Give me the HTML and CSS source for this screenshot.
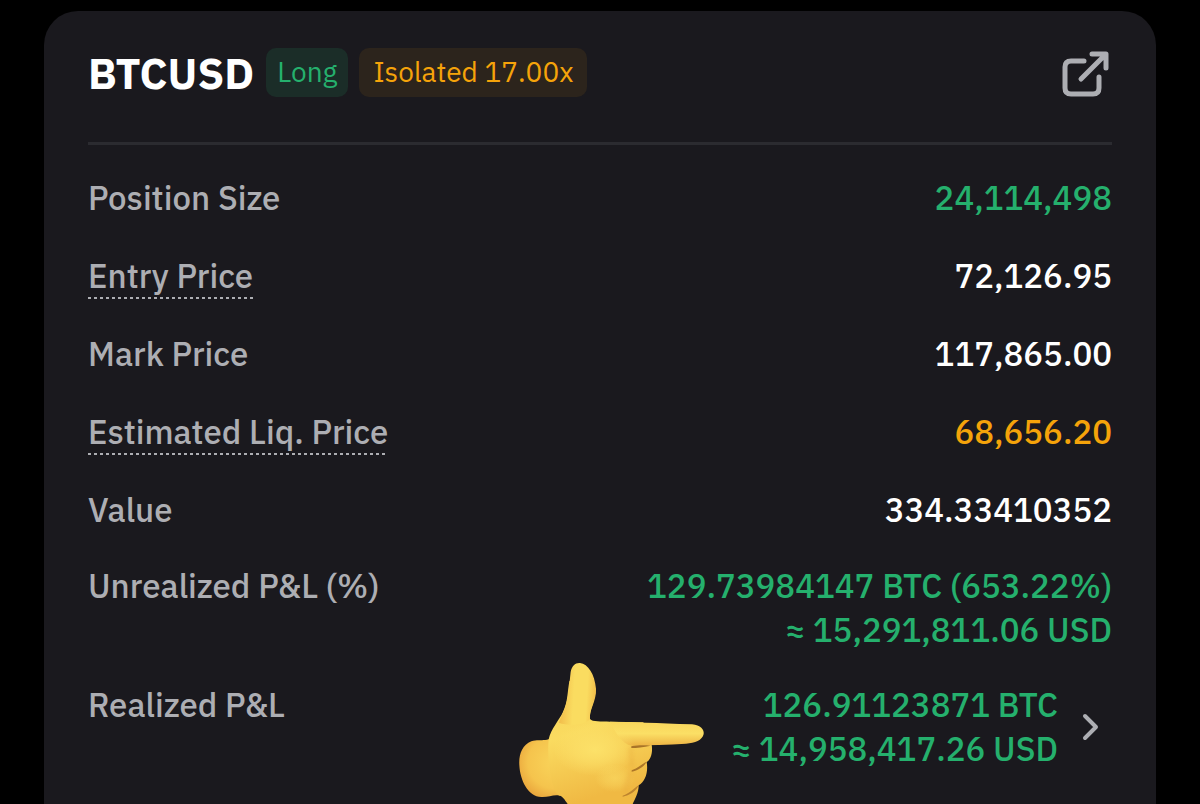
FILE: index.html
```html
<!DOCTYPE html>
<html lang="en">
<head>
    <meta charset="UTF-8">
    <meta name="viewport" content="width=device-width, initial-scale=1.0">
    <title>BTCUSD Position</title>
    <link rel="stylesheet" href="styles.css">
</head>
<body>
    <main class="card">
        <header class="card-header">
            <h1>BTCUSD</h1>
            <span class="badge long">Long</span>
            <span class="badge isolated">Isolated 17.00x</span>
            <button class="share" type="button" aria-label="Share position">
                <svg viewBox="0 0 48 48" fill="none" stroke="currentColor" stroke-width="5" stroke-linecap="round" stroke-linejoin="round">
                    <path d="M23 12H10Q4 12 4 18V39Q4 45 10 45H32Q38 45 38 39V28"/>
                    <path d="M20 30L44 6M31 5H45V19"/>
                </svg>
            </button>
        </header>

        <dl class="details">
            <div class="row">
                <dt>Position Size</dt>
                <dd class="green">24,114,498</dd>
            </div>
            <div class="row">
                <dt><span class="hint">Entry Price</span></dt>
                <dd>72,126.95</dd>
            </div>
            <div class="row">
                <dt>Mark Price</dt>
                <dd>117,865.00</dd>
            </div>
            <div class="row">
                <dt><span class="hint">Estimated Liq. Price</span></dt>
                <dd class="orange">68,656.20</dd>
            </div>
            <div class="row">
                <dt>Value</dt>
                <dd>334.33410352</dd>
            </div>
            <div class="row double">
                <dt>Unrealized P&amp;L (%)</dt>
                <dd class="green">129.73984147 BTC (653.22%)<br>≈ 15,291,811.06 USD</dd>
            </div>
            <div class="row double">
                <dt>Realized P&amp;L</dt>
                <dd class="green with-arrow">
                    <span>126.91123871 BTC<br>≈ 14,958,417.26 USD</span>
                    <button class="more" type="button" aria-label="Realized P&amp;L details">
                        <svg viewBox="0 0 18 28" fill="none" stroke="currentColor" stroke-width="4" stroke-linecap="round" stroke-linejoin="round">
                            <path d="M3 3L14 14L3 25"/>
                        </svg>
                    </button>
                </dd>
            </div>
        </dl>

        <!-- pointing hand -->
        <svg class="hand" viewBox="0 0 660 462" aria-hidden="true">
            <defs>
                <linearGradient id="palm" x1="0" y1="0" x2="0.25" y2="1">
                    <stop offset="0" stop-color="#f6cf57"/>
                    <stop offset="0.5" stop-color="#fadb60"/>
                    <stop offset="1" stop-color="#f0b943"/>
                </linearGradient>
                <linearGradient id="thumb" x1="0" y1="0" x2="1" y2="0.1">
                    <stop offset="0" stop-color="#efb344"/>
                    <stop offset="0.45" stop-color="#fadc60"/>
                    <stop offset="0.8" stop-color="#fadc60"/>
                    <stop offset="1" stop-color="#f3c24d"/>
                </linearGradient>
                <linearGradient id="finger" x1="0" y1="0" x2="0" y2="1">
                    <stop offset="0" stop-color="#f8d65c"/>
                    <stop offset="0.5" stop-color="#fbdf65"/>
                    <stop offset="1" stop-color="#edb344"/>
                </linearGradient>
                <radialGradient id="wrist" cx="0.6" cy="0.4" r="0.65">
                    <stop offset="0" stop-color="#f9d45a"/>
                    <stop offset="0.7" stop-color="#f5c44d"/>
                    <stop offset="1" stop-color="#eba93e"/>
                </radialGradient>
                <radialGradient id="glow">
                    <stop offset="0" stop-color="#fce169"/>
                    <stop offset="0.5" stop-color="#fce169" stop-opacity="0.6"/>
                    <stop offset="1" stop-color="#fce169" stop-opacity="0"/>
                </radialGradient>
                <filter id="soft" x="-50%" y="-30%" width="200%" height="160%">
                    <feGaussianBlur stdDeviation="6"/>
                </filter>
            </defs>
            <path fill="url(#wrist)" d="M146 268C128 274 112 267 94 274C66 286 56 314 58 345C60 390 84 440 124 441C147 442 161 432 180 437L240 400L230 290Z"/>
            <path fill="url(#palm)" d="M146 268C153 237 177 211 189 186C204 154 202 128 208 94L240 60L286 120C287 153 267 178 270 207C278 216 302 214 330 215L430 217L455 284C459 308 452 329 440 336C445 364 437 394 416 406C416 430 405 446 398 462H203C193 449 190 440 176 436C158 425 139 340 146 268Z"/>
            <path fill="url(#thumb)" d="M188 190C207 153 207 105 212 66C216 46 226 38 240 39C264 42 284 72 288 116C290 153 267 178 270 207C258 224 210 230 176 218Z"/>
            <path fill="url(#finger)" d="M330 215C400 216 470 219 576 223C602 226 613 239 611 252C607 271 585 279 558 281C504 285 448 285 396 287C365 282 345 245 330 215Z"/>
            <ellipse cx="285" cy="298" rx="125" ry="80" fill="url(#glow)"/>
            <ellipse cx="345" cy="385" rx="62" ry="42" fill="url(#glow)" opacity="0.5"/>
            <path d="M395 290C391 315 393 338 399 354M394 362C385 390 378 410 376 430" fill="none" stroke="#e9ab3d" stroke-width="12" opacity="0.45" filter="url(#soft)"/>
            <path d="M394 289C414 285 436 286 452 287C430 291 410 294 394 294Z" fill="#a97428"/>
            <path d="M395 361C414 354 426 341 440 335C433 350 412 362 395 365Z" fill="#ad7628"/>
            <path d="M368 437C389 431 400 416 416 406C410 423 388 437 368 440Z" fill="#bd842e"/>
        </svg>
    </main>
</body>
</html>
```
FILE: styles.css
```css
:root {
    --card: #1a191e;
    --line: #2b2b30;
    --muted: #adaeb3;
    --green: #25b06d;
    --orange: #f5a30a;
}

* {
    margin: 0;
    padding: 0;
    box-sizing: border-box;
}

body {
    display: flex;
    min-height: 100vh;
    padding: 11px 44px 0;
    background: #000;
    color: #fff;
    font-family: "IBM Plex Sans", "Noto Sans", sans-serif;
    font-size: 33px;
    font-weight: 500;
    line-height: 47px;
}

.card {
    position: relative;
    flex: 1;
    padding: 37px 44px 30px;
    overflow: hidden;
    background: var(--card);
    border-radius: 34px 34px 0 0;
}

.card-header {
    display: flex;
    align-items: center;
    padding-bottom: 45px;
    border-bottom: 3px solid var(--line);
}

h1 {
    margin-right: 12px;
    font-size: 43px;
    font-weight: 700;
    line-height: 44px;
}

.badge {
    margin-right: 11px;
    padding-bottom: 2px;
    border-radius: 10px;
    font-size: 28px;
    font-weight: 400;
    line-height: 47px;
}

.long {
    padding-left: 11px;
    padding-right: 11px;
    background: #1b2d28;
    color: var(--green);
}

.isolated {
    padding-left: 14px;
    padding-right: 14px;
    background: #2c241c;
    color: var(--orange);
}

button {
    border: none;
    background: none;
    color: var(--muted);
    cursor: pointer;
}

button svg {
    display: block;
}

.share {
    margin-left: auto;
    margin-right: 3px;
}

.share svg {
    width: 48px;
    height: 48px;
}

.details {
    display: flex;
    flex-direction: column;
    gap: 31px;
    margin-top: 29px;
}

.row {
    display: flex;
    justify-content: space-between;
}

.double {
    line-height: 44px;
}

dt {
    color: var(--muted);
}

dd {
    text-align: right;
}

.hint {
    display: inline-block;
    background: repeating-linear-gradient(to right, var(--muted) 0 3px, transparent 3px 6px) bottom / 100% 2px no-repeat;
}

.green {
    color: var(--green);
}

.orange {
    color: var(--orange);
}

.with-arrow {
    display: flex;
    align-items: center;
    gap: 24px;
    padding-right: 12px;
}

.more svg {
    width: 18px;
    height: 28px;
}

.hand {
    position: absolute;
    right: 436px;
    bottom: 0;
    width: 220px;
    height: 154px;
}
```
